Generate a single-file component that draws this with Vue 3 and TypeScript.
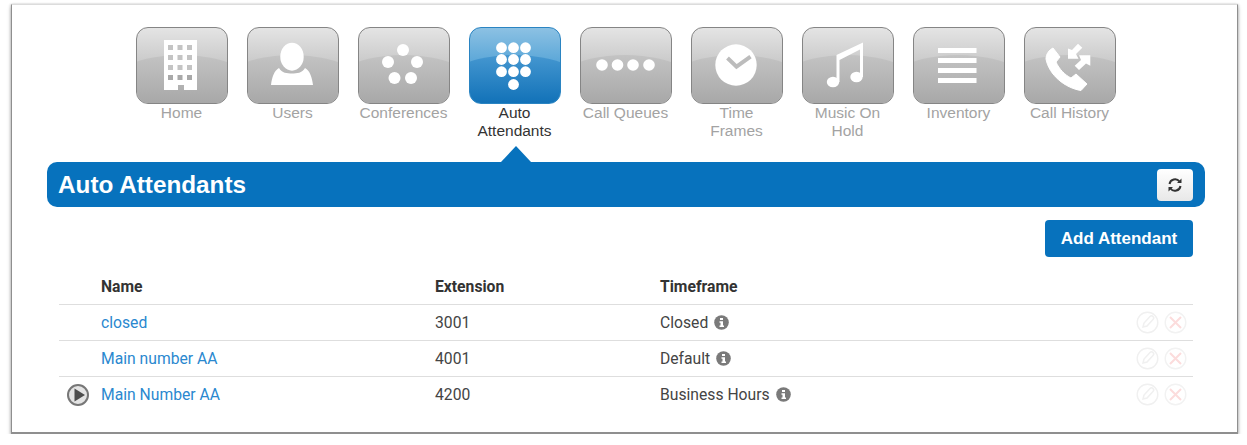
<template>
  <div class="frame">
    <nav class="nav">
      <div v-for="item in navItems" :key="item.id" class="nav-item" :class="{ active: item.id === 'auto' }">
        <div class="tile">
          <svg class="tile-icon" width="92" height="76" viewBox="0 0 92 76">
            <g v-if="item.id === 'home'">
              <path fill="#fff" d="M29 13h33v50H49v-5h-6v5H29z" />
              <template v-for="row in [18, 28, 38, 48]" :key="row">
                <rect v-for="col in [33, 42.5, 52]" :key="col" :x="col" :y="row" width="5" height="5" :fill="row === 48 ? '#a9a9a9' : '#c4c4c4'" />
              </template>
            </g>
            <g v-else-if="item.id === 'users'" fill="#fff">
              <ellipse cx="46" cy="29.700" rx="11.700" ry="14" />
              <path d="M25 58c1-8 3-14 8-17 3 5 8 5.500 13 5.500s10-.5 13-5.500c5 3 7 9 8 17z" />
            </g>
            <g v-else-if="item.id === 'conf'" fill="#fff">
              <circle cx="46" cy="23" r="6" />
              <circle cx="31" cy="35" r="6" />
              <circle cx="60" cy="35" r="6" />
              <circle cx="37.500" cy="51" r="6" />
              <circle cx="54" cy="51" r="6" />
            </g>
            <g v-else-if="item.id === 'auto'" fill="#fff">
              <template v-for="row in [20.700, 32.500, 44.700]" :key="row">
                <circle v-for="col in [33.500, 45.500, 57.500]" :key="col" :cx="col" :cy="row" r="5.400" />
              </template>
              <circle cx="45.500" cy="57.500" r="5.400" />
            </g>
            <g v-else-if="item.id === 'queues'" fill="#fff">
              <circle cx="23" cy="38" r="5.800" />
              <circle cx="38.500" cy="38" r="5.800" />
              <circle cx="54" cy="38" r="5.800" />
              <circle cx="70" cy="38" r="5.800" />
            </g>
            <g v-else-if="item.id === 'time'">
              <circle cx="46" cy="38" r="20.700" fill="#fff" />
              <path d="M37.500 31l9 8.700L60.500 29.700" fill="none" stroke="#bcbcbc" stroke-width="4" />
            </g>
            <g v-else-if="item.id === 'music'" fill="#fff">
              <ellipse cx="32" cy="55" rx="6.200" ry="5.200" />
              <ellipse cx="55.500" cy="50" rx="6.200" ry="5.200" />
              <path d="M35.500 28l26.500-12.500V50h-3V22.500L38.500 33V55h-3z" />
            </g>
            <g v-else-if="item.id === 'inventory'" fill="#fff">
              <rect x="26" y="21" width="38.500" height="5" />
              <rect x="26" y="31" width="38.500" height="5" />
              <rect x="26" y="41" width="38.500" height="5" />
              <rect x="26" y="51" width="38.500" height="5" />
            </g>
            <g v-else fill="#fff">
              <path d="M30 21l7 9-4 5c3 7 9 13 15 16l5-4 11 10-6 6.500C42 61 26 48 23 32c0-5 3-9 7-11z" stroke="#fff" stroke-width="1" stroke-linejoin="round" />
              <path d="M55 16.700l4.300 4-6.300 6.300 2.500 4.700H45V21.500l4 1.500z" />
              <path d="M51.700 38.700l6.300-5.700-2-4.700h11.300v10.400l-4.300-2.200-7 6.500z" />
            </g>
          </svg>
        </div>
        <div class="nav-label">{{ item.label }}</div>
      </div>
    </nav>

    <header class="title-bar">
      <h1 class="title">Auto Attendants</h1>
      <button class="refresh" type="button">
        <svg width="16" height="16" viewBox="0 0 16 16" fill="none" stroke="#333" stroke-width="2">
          <path d="M2.500 7a5.600 5.600 0 0 1 10-2.500" />
          <path d="M13.500 9a5.600 5.600 0 0 1-10 2.500" />
          <path d="M14.500 1.500v4.500H10z" fill="#333" stroke="none" />
          <path d="M1.500 14.500V10H6z" fill="#333" stroke="none" />
        </svg>
      </button>
    </header>

    <div class="toolbar">
      <button class="add-btn" type="button">Add Attendant</button>
    </div>

    <section class="table">
      <div class="row head">
        <span></span>
        <span>Name</span>
        <span>Extension</span>
        <span>Timeframe</span>
        <span></span>
      </div>
      <div v-for="row in rows" :key="row.ext" class="row">
        <span class="play-cell">
          <svg v-if="row.play" width="24" height="24" viewBox="0 0 24 24">
            <circle cx="12" cy="12" r="10" fill="#e4e4e4" stroke="#777" stroke-width="2" />
            <path d="M8.500 5.500L19 12 8.500 18.500z" fill="#4d4d4d" />
          </svg>
        </span>
        <a class="name">{{ row.name }}</a>
        <span>{{ row.ext }}</span>
        <span class="timeframe">
          {{ row.timeframe }}
          <svg width="15" height="15" viewBox="0 0 15 15">
            <circle cx="7.500" cy="7.500" r="7.300" fill="#7a7a7a" />
            <path d="M6 3h3v2H6zM5.500 6.200H9v4.300h1v1.500H5.500v-1.500h1V7.700h-1z" fill="#fff" />
          </svg>
        </span>
        <span class="actions">
          <svg width="23" height="23" viewBox="0 0 23 23" fill="none" stroke="#f0f0f0">
            <circle cx="11.500" cy="11.500" r="10.300" stroke-width="1.400" />
            <path d="M7 16l1-4 6-6.500a2 2 0 0 1 3 3L11 15z" stroke-width="1.500" />
          </svg>
          <svg width="23" height="23" viewBox="0 0 23 23" fill="none">
            <circle cx="11.500" cy="11.500" r="10.300" stroke="#f2f2f2" stroke-width="1.400" />
            <path d="M6 6l11 11M17 6L6 17" stroke="#fcdcdc" stroke-width="2" />
          </svg>
        </span>
      </div>
    </section>
  </div>
</template>

<script setup lang="ts">
const navItems = [
  { id: 'home', label: 'Home' },
  { id: 'users', label: 'Users' },
  { id: 'conf', label: 'Conferences' },
  { id: 'auto', label: 'Auto\nAttendants' },
  { id: 'queues', label: 'Call Queues' },
  { id: 'time', label: 'Time\nFrames' },
  { id: 'music', label: 'Music On\nHold' },
  { id: 'inventory', label: 'Inventory' },
  { id: 'history', label: 'Call History' },
];

const rows = [
  { name: 'closed', ext: '3001', timeframe: 'Closed', play: false },
  { name: 'Main number AA', ext: '4001', timeframe: 'Default', play: false },
  { name: 'Main Number AA', ext: '4200', timeframe: 'Business Hours', play: true },
];
</script>

<style>
html,
body {
  background: #fff;
}
</style>

<style scoped>
.frame {
  box-sizing: border-box;
  width: 1227px;
  height: 430px;
  margin: 4px 0 0 11px;
  border: 1px solid #8f8f8f;
  border-top-color: #dcdcdc;
  border-bottom-width: 2px;
  background: #fff;
  box-shadow: 0 3px 4px rgba(0, 0, 0, 0.25), -1px 0 2px rgba(0, 0, 0, 0.12), 1px 0 2px rgba(0, 0, 0, 0.12);
  font-family: Roboto, "Liberation Sans", sans-serif;
  overflow: hidden;
}

.nav {
  display: flex;
  height: 157px;
  padding: 22px 0 0 114px;
  box-sizing: border-box;
}

.nav-item {
  width: 111px;
  display: flex;
  flex-direction: column;
  align-items: center;
}

.tile {
  position: relative;
  box-sizing: border-box;
  width: 92px;
  height: 77px;
  border: 1.500px solid #858585;
  border-radius: 12px;
  background: linear-gradient(#e4e4e4 0%, #cccccc 42%, #c6c6c6 100%);
  overflow: hidden;
}

.tile::before {
  content: '';
  position: absolute;
  left: -46px;
  top: 27px;
  width: 180px;
  height: 100px;
  border-radius: 50%;
  background: linear-gradient(#c3c3c3 0%, #a8a8a8 48%);
}

.tile-icon {
  position: absolute;
  left: -1.500px;
  top: -1.500px;
}

.active .tile {
  border-color: #2a84c2;
  background: linear-gradient(#8cc1e3 0%, #5fa9d9 42%, #55a2d4 100%);
}

.active .tile::before {
  background: linear-gradient(#4597d0 0%, #1272b8 48%);
}

.nav-label {
  width: 104px;
  font-family: "Liberation Sans", Arial, sans-serif;
  font-size: 15.500px;
  line-height: 18px;
  text-align: center;
  white-space: pre-line;
  color: #a3a3a3;
}

.active .nav-label {
  color: #333;
}

.title-bar {
  position: relative;
  display: flex;
  align-items: center;
  justify-content: space-between;
  box-sizing: border-box;
  height: 45px;
  margin: 0 32px 0 35px;
  padding: 0 12px 0 11px;
  border-radius: 10px;
  background: #0772bd;
}

.title-bar::before {
  content: '';
  position: absolute;
  left: 454px;
  bottom: 100%;
  border-left: 15px solid transparent;
  border-right: 15px solid transparent;
  border-bottom: 16px solid #0772bd;
}

.title {
  margin: 0;
  font-family: "Liberation Sans", Arial, sans-serif;
  font-size: 24.300px;
  font-weight: 700;
  color: #fff;
}

.refresh {
  display: flex;
  align-items: center;
  justify-content: center;
  width: 36px;
  height: 32px;
  padding: 0;
  border: 0;
  border-radius: 4px;
  background: linear-gradient(#fff, #e8e8e8);
}

.toolbar {
  display: flex;
  justify-content: flex-end;
  padding: 13px 44px 0 0;
}

.add-btn {
  width: 148px;
  height: 37px;
  padding: 0;
  border: 0;
  border-radius: 4px;
  background: #0772bd;
  color: #fff;
  font-family: "Liberation Sans", Arial, sans-serif;
  font-size: 17px;
  font-weight: 700;
}

.table {
  margin: 12px 44px 0 47px;
}

.row {
  display: grid;
  grid-template-columns: 42px 334px 225px 1fr 62px;
  align-items: center;
  height: 36px;
  border-bottom: 1px solid #dedede;
  box-sizing: border-box;
  font-size: 15.700px;
  color: #444;
}

.row:last-child {
  border-bottom-color: transparent;
}

.head {
  font-weight: 700;
  color: #333;
}

.play-cell {
  display: flex;
  padding-left: 7px;
}

.name {
  color: #2a88cf;
}

.timeframe {
  display: flex;
  align-items: center;
  gap: 6px;
}

.actions {
  display: flex;
  justify-content: flex-end;
  gap: 5px;
  padding-right: 6px;
}
</style>
